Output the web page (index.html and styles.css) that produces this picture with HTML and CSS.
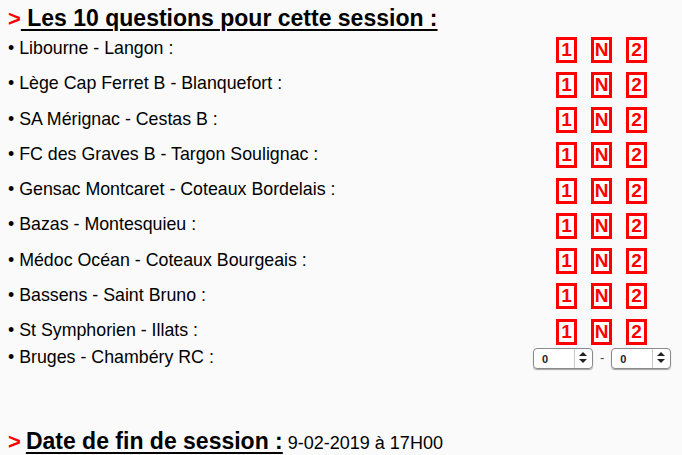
FILE: index.html
```html
<!DOCTYPE html>
<html lang="fr">
<head>
    <meta charset="UTF-8">
    <title>Pronostics - session</title>
    <link rel="stylesheet" href="styles.css">
</head>
<body>
    <h2 class="title"><span class="arrow">&gt;</span><u> Les 10 questions pour cette session :</u></h2>

    <div class="matches">
        <div class="match">
            <span class="teams">&bull; Libourne - Langon :</span>
            <span class="picks"><span class="pick">1</span><span class="pick">N</span><span class="pick">2</span></span>
        </div>
        <div class="match">
            <span class="teams">&bull; Lège Cap Ferret B - Blanquefort :</span>
            <span class="picks"><span class="pick">1</span><span class="pick">N</span><span class="pick">2</span></span>
        </div>
        <div class="match">
            <span class="teams">&bull; SA Mérignac - Cestas B :</span>
            <span class="picks"><span class="pick">1</span><span class="pick">N</span><span class="pick">2</span></span>
        </div>
        <div class="match">
            <span class="teams">&bull; FC des Graves B - Targon Soulignac :</span>
            <span class="picks"><span class="pick">1</span><span class="pick">N</span><span class="pick">2</span></span>
        </div>
        <div class="match">
            <span class="teams">&bull; Gensac Montcaret - Coteaux Bordelais :</span>
            <span class="picks"><span class="pick">1</span><span class="pick">N</span><span class="pick">2</span></span>
        </div>
        <div class="match">
            <span class="teams">&bull; Bazas - Montesquieu :</span>
            <span class="picks"><span class="pick">1</span><span class="pick">N</span><span class="pick">2</span></span>
        </div>
        <div class="match">
            <span class="teams">&bull; Médoc Océan - Coteaux Bourgeais :</span>
            <span class="picks"><span class="pick">1</span><span class="pick">N</span><span class="pick">2</span></span>
        </div>
        <div class="match">
            <span class="teams">&bull; Bassens - Saint Bruno :</span>
            <span class="picks"><span class="pick">1</span><span class="pick">N</span><span class="pick">2</span></span>
        </div>
        <div class="match">
            <span class="teams">&bull; St Symphorien - Illats :</span>
            <span class="picks"><span class="pick">1</span><span class="pick">N</span><span class="pick">2</span></span>
        </div>
        <div class="match score-row">
            <span class="teams">&bull; Bruges - Chambéry RC :</span>
            <span class="score">
                <span class="select-wrap">
                    <select><option>0</option><option>1</option><option>2</option><option>3</option></select>
                    <svg class="updown" width="8" height="11" viewBox="0 0 8 11"><path d="M4 0 L8 4 H0 Z M0 7 H8 L4 11 Z" fill="#222"/></svg>
                </span>
                <span class="dash">-</span>
                <span class="select-wrap">
                    <select><option>0</option><option>1</option><option>2</option><option>3</option></select>
                    <svg class="updown" width="8" height="11" viewBox="0 0 8 11"><path d="M4 0 L8 4 H0 Z M0 7 H8 L4 11 Z" fill="#222"/></svg>
                </span>
            </span>
        </div>
    </div>

    <p class="end-date"><span class="arrow">&gt;</span> <u class="label">Date de fin de session :</u> 9-02-2019 à 17H00</p>
</body>
</html>
```

FILE: styles.css
```css
body {
    margin: 0 8px;
    background-color: #fafafa;
    font-family: "Liberation Sans", Arial, sans-serif;
    font-size: 17.8px;
    color: #000;
}
.title {
    margin: 0;
    height: 31px;
    line-height: 36px;
    font-size: 23px;
    font-weight: bold;
}
.title u,
.end-date u {
    text-decoration-thickness: 2px;
    text-underline-offset: 3px;
}
.arrow {
    color: #f00;
    font-weight: bold;
    font-size: 22px;
}
.matches {
    display: flex;
    flex-direction: column;
}
.match {
    display: grid;
    grid-template-columns: 548px auto;
    align-items: center;
    height: 35.25px;
}
.picks {
    display: flex;
    gap: 14px;
    padding-top: 2px;
}
.pick {
    display: flex;
    align-items: center;
    justify-content: center;
    box-sizing: border-box;
    width: 21px;
    height: 26px;
    border: 3px solid #f00;
    outline: 1px solid #fff;
    outline-offset: -4px;
    background: #fff;
    color: #f00;
    font-weight: bold;
    font-size: 19px;
}
.score-row {
    grid-template-columns: 525px auto;
    height: 22px;
    margin-top: -2px;
}
.score {
    display: flex;
    align-items: center;
    gap: 7px;
}
.select-wrap {
    position: relative;
    display: inline-block;
    height: 21px;
}
.select-wrap select {
    appearance: none;
    -webkit-appearance: none;
    box-sizing: border-box;
    width: 60px;
    height: 21px;
    padding: 0 0 0 8px;
    border: 1px solid #8a8a8a;
    border-radius: 4px;
    background: linear-gradient(to right, #fff 40px, #c8c8c8 40px, #c8c8c8 41px, #fff 41px);
    box-shadow: 0 1px 1px rgba(0,0,0,0.35);
    font-family: "Liberation Sans", Arial, sans-serif;
    font-size: 11px;
    font-weight: bold;
    color: #222;
}
.updown {
    position: absolute;
    right: 6px;
    top: 5px;
    pointer-events: none;
}
.dash {
    font-size: 13px;
    color: #444;
}
.end-date {
    margin: 60px 0 0;
    font-size: 18px;
}
.end-date .arrow {
    font-size: 22px;
}
.end-date .label {
    font-size: 23px;
    font-weight: bold;
}
```
